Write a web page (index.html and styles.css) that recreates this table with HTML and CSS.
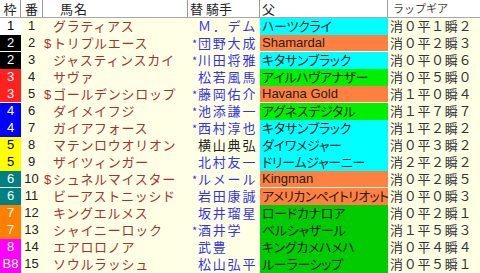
FILE: index.html
```html
<!DOCTYPE html>
<html lang="ja">
<head>
<meta charset="utf-8">
<link rel="stylesheet" href="styles.css">
</head>
<body>
<div class="table">
  <div class="hdr">
    <div class="h h-waku">枠</div>
    <div class="h h-ban">番</div>
    <div class="h h-name">馬名</div>
    <div class="h h-jockey">替 騎手</div>
    <div class="h h-sire">父</div>
    <div class="h h-lap">ラップギア</div>
  </div>

  <div class="row"><div class="waku w1">1</div><div class="ban">1</div><div class="name"><span class="dl"></span>グラティアス</div><div class="jockey"><span class="mk"></span>Ｍ．デム</div><div class="sire s-cyan"><span class="kn">ハーツクライ</span></div><div class="lap">消０平１瞬２</div></div>
  <div class="row"><div class="waku w2">2</div><div class="ban">2</div><div class="name"><span class="dl">$</span>トリプルエース</div><div class="jockey"><span class="mk">*</span>団野大成</div><div class="sire s-orange">Shamardal</div><div class="lap">消０平２瞬３</div></div>
  <div class="row"><div class="waku w2">2</div><div class="ban">3</div><div class="name"><span class="dl"></span>ジャスティンスカイ</div><div class="jockey"><span class="mk">*</span>川田将雅</div><div class="sire s-cyan"><span class="kn">キタサンブラック</span></div><div class="lap">消０平０瞬６</div></div>
  <div class="row"><div class="waku w3">3</div><div class="ban">4</div><div class="name"><span class="dl"></span>サヴァ</div><div class="jockey"><span class="mk"></span>松若風馬</div><div class="sire s-green"><span class="kn">アイルハヴアナザー</span></div><div class="lap">消０平５瞬０</div></div>
  <div class="row"><div class="waku w3">3</div><div class="ban">5</div><div class="name"><span class="dl">$</span>ゴールデンシロップ</div><div class="jockey"><span class="mk">*</span>藤岡佑介</div><div class="sire s-orange">Havana Gold</div><div class="lap">消１平０瞬４</div></div>
  <div class="row"><div class="waku w4">4</div><div class="ban">6</div><div class="name"><span class="dl"></span>ダイメイフジ</div><div class="jockey"><span class="mk">*</span>池添謙一</div><div class="sire s-green"><span class="kn">アグネスデジタル</span></div><div class="lap">消１平７瞬７</div></div>
  <div class="row"><div class="waku w4">4</div><div class="ban">7</div><div class="name"><span class="dl"></span>ガイアフォース</div><div class="jockey"><span class="mk">*</span>西村淳也</div><div class="sire s-cyan"><span class="kn">キタサンブラック</span></div><div class="lap">消１平２瞬２</div></div>
  <div class="row"><div class="waku w5">5</div><div class="ban">8</div><div class="name"><span class="dl"></span>マテンロウオリオン</div><div class="jockey black"><span class="mk"></span>横山典弘</div><div class="sire s-cyan"><span class="kn">ダイワメジャー</span></div><div class="lap">消０平３瞬２</div></div>
  <div class="row"><div class="waku w5">5</div><div class="ban">9</div><div class="name"><span class="dl"></span>ザイツィンガー</div><div class="jockey"><span class="mk"></span>北村友一</div><div class="sire s-cyan"><span class="kn">ドリームジャーニー</span></div><div class="lap">消２平２瞬２</div></div>
  <div class="row"><div class="waku w6">6</div><div class="ban">10</div><div class="name"><span class="dl">$</span>シュネルマイスター</div><div class="jockey"><span class="mk">*</span>ルメール</div><div class="sire s-orange">Kingman</div><div class="lap">消０平２瞬５</div></div>
  <div class="row"><div class="waku w6">6</div><div class="ban">11</div><div class="name"><span class="dl"></span>ビーアストニッシド</div><div class="jockey"><span class="mk"></span>岩田康誠</div><div class="sire s-orange"><span class="kn long">アメリカンペイトリオット</span></div><div class="lap">消０平０瞬３</div></div>
  <div class="row"><div class="waku w7">7</div><div class="ban">12</div><div class="name"><span class="dl"></span>キングエルメス</div><div class="jockey"><span class="mk"></span>坂井瑠星</div><div class="sire s-green2"><span class="kn">ロードカナロア</span></div><div class="lap">消０平２瞬１</div></div>
  <div class="row"><div class="waku w7">7</div><div class="ban">13</div><div class="name"><span class="dl"></span>シャイニーロック</div><div class="jockey"><span class="mk">*</span>酒井学</div><div class="sire s-green2"><span class="kn">ベルシャザール</span></div><div class="lap">消１平５瞬３</div></div>
  <div class="row"><div class="waku w8">8</div><div class="ban">14</div><div class="name"><span class="dl"></span>エアロロノア</div><div class="jockey"><span class="mk"></span>武豊</div><div class="sire s-green2"><span class="kn">キングカメハメハ</span></div><div class="lap">消０平４瞬４</div></div>
  <div class="row"><div class="waku w8">B8</div><div class="ban">15</div><div class="name"><span class="dl"></span>ソウルラッシュ</div><div class="jockey"><span class="mk"></span>松山弘平</div><div class="sire s-green2"><span class="kn">ルーラーシップ</span></div><div class="lap">消０平５瞬１</div></div>
</div>
</body>
</html>
```

FILE: styles.css
```css
html, body {
  margin: 0;
  padding: 0;
  background: #ffffe6;
}
body {
  width: 480px;
  height: 273px;
  overflow: hidden;
  font-family: "Noto Sans CJK JP", "Liberation Sans", sans-serif;
}
.table {
  display: flex;
  flex-direction: column;
}
.hdr, .row {
  display: grid;
  grid-template-columns: 21px 22px 145px 72px 128px 92px;
}
.hdr {
  height: 18px;
  background: #ffffff;
  border-bottom: 1px solid #a8a8a8;
  box-sizing: border-box;
}
.h {
  font-size: 13px;
  line-height: 17px;
  color: #222;
  border-right: 1px solid #9a9a9a;
  box-sizing: border-box;
  white-space: nowrap;
}
.h-waku { text-align: center; }
.h-ban { text-align: center; }
.h-name { padding-left: 17px; letter-spacing: 1px; }
.h-jockey { padding-left: 2px; }
.h-sire { padding-left: 2px; }
.h-lap { border-right: none; padding-left: 5px; font-size: 11px; color: #444; }

.row {
  height: 17px;
}
.row > div {
  box-sizing: border-box;
  line-height: 16px;
  white-space: nowrap;
}
.waku {
  text-align: center;
  font-family: "Liberation Sans", sans-serif;
  font-size: 13px;
  color: #fff;
  border-bottom: 1px solid #ffffe6;
}
.w1 { background: #ffffff; color: #000; }
.w2 { background: #000000; }
.w3 { background: #ff2020; }
.w4 { background: #0000ff; }
.w5 { background: #ffff00; color: #000; }
.w6 { background: #008080; }
.w7 { background: #ff8000; }
.w8 { background: #ff00ff; }

.ban {
  font-family: "Liberation Sans", sans-serif;
  font-size: 13px;
  color: #222;
  padding-left: 3px;
  text-align: center;
  padding-right: 4px;
}
.name {
  font-size: 13px;
  color: #a33333;
  letter-spacing: 0.7px;
  padding-left: 1px;
}
.dl {
  display: inline-block;
  width: 9px;
  font-family: "Liberation Sans", sans-serif;
  letter-spacing: 0;
}
.jockey {
  font-size: 13px;
  color: #3333ee;
  letter-spacing: 1.8px;
  padding-left: 4px;
}
.jockey.black { color: #222; }
.mk {
  display: inline-block;
  width: 6px;
  font-size: 11px;
  letter-spacing: 0;
  vertical-align: top;
}
.sire {
  font-family: "Liberation Sans", "Noto Sans CJK JP", sans-serif;
  font-size: 13px;
  color: #222;
  padding-left: 2px;
  border-bottom: 1px solid #ffffe6;
}
.kn {
  font-family: "Noto Sans CJK JP", sans-serif;
  font-feature-settings: "palt";
  letter-spacing: -0.3px;
}
.kn.long { letter-spacing: -0.7px; }
.s-cyan { background: #00ffff; }
.s-orange { background: #ff8040; }
.s-green { background: #00f000; }
.s-green2 { background: #00cc00; }
.lap {
  font-size: 13px;
  color: #333;
  letter-spacing: 0.7px;
  padding-left: 2px;
}
```
